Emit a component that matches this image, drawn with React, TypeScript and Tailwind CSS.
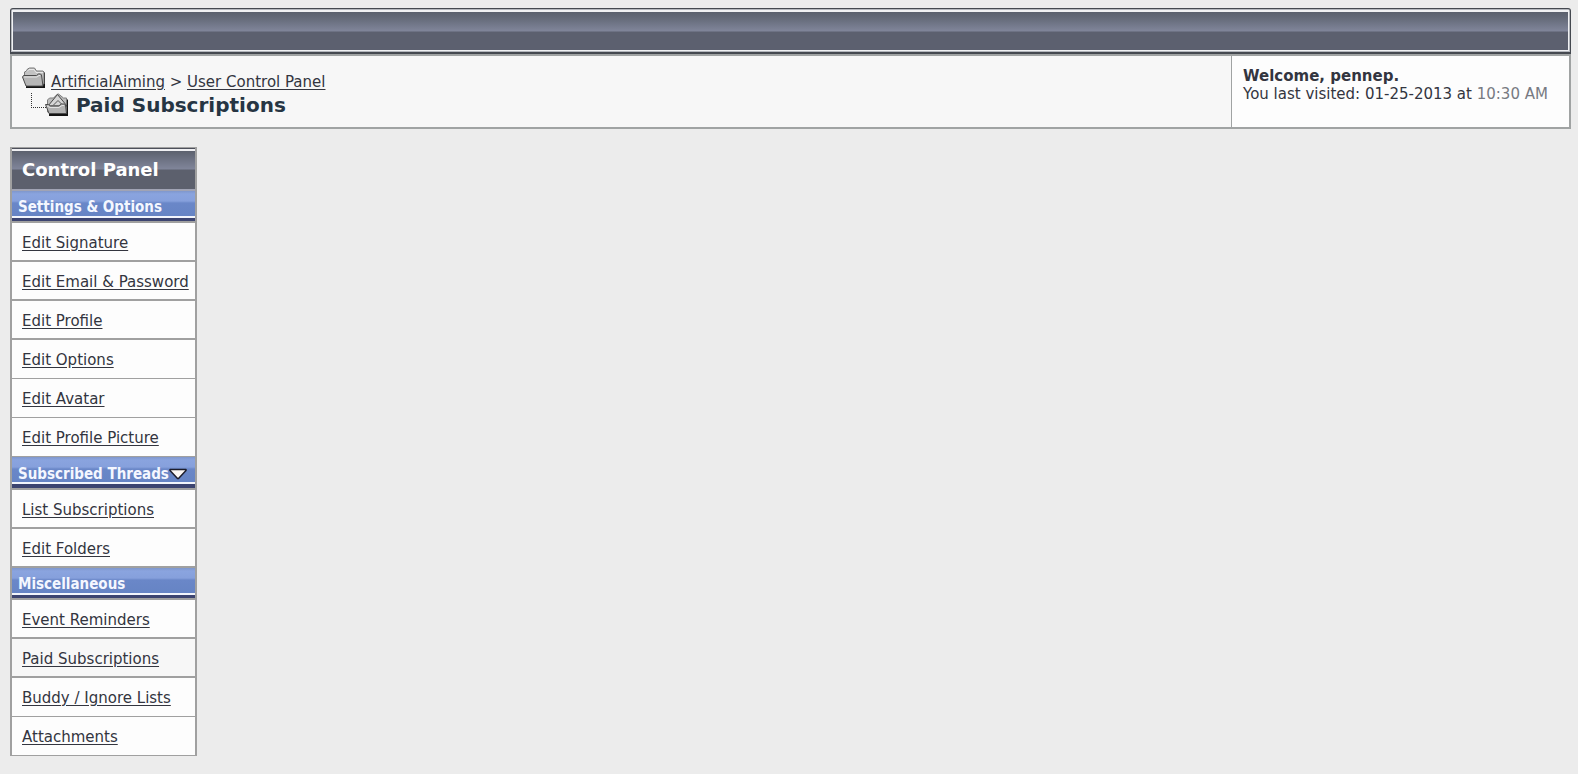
type NavItem = { label: string; current?: boolean; thin?: boolean }
type NavGroup = { title: string; collapsible?: boolean; items: NavItem[] }

const groups: NavGroup[] = [
  {
    title: 'Settings & Options',
    items: [
      { label: 'Edit Signature' },
      { label: 'Edit Email & Password' },
      { label: 'Edit Profile' },
      { label: 'Edit Options', thin: true },
      { label: 'Edit Avatar', thin: true },
      { label: 'Edit Profile Picture', thin: true }
    ]
  },
  {
    title: 'Subscribed Threads',
    collapsible: true,
    items: [{ label: 'List Subscriptions' }, { label: 'Edit Folders' }]
  },
  {
    title: 'Miscellaneous',
    items: [
      { label: 'Event Reminders' },
      { label: 'Paid Subscriptions', current: true },
      { label: 'Buddy / Ignore Lists', thin: true },
      { label: 'Attachments', thin: true }
    ]
  }
]

const FolderIcon = () => (
  <svg width="24" height="22" viewBox="0 0 24 22" className="shrink-0" aria-hidden="true">
    <path d="M4 21V6h18l1-1v16z" fill="#141414" />
    <path d="M2.5 9V5l2-1 1-2 2-1h5l2 3h6.500l1 1v12h-4z" fill="#c2c2c2" stroke="#787878" />
    <path d="M5 4.500l2-2h5l2 3h7" fill="none" stroke="#e8e8e8" />
    <path d="M1.500 8.500h13l2-1.500h2l1 1 1.500 11H4L.5 10z" fill="#b6b6b6" stroke="#4a4a4a" />
    <path d="M2 10h13l2-1.500h1" fill="none" stroke="#e6e6e6" />
    <path d="M5 18.500h14" stroke="#8a8a8a" />
  </svg>
)

const OpenFolderIcon = () => (
  <svg width="38" height="24" viewBox="0 0 38 24" className="shrink-0" aria-hidden="true">
    <path d="M1.5 0v14M1 14.5h16" fill="none" stroke="#333" strokeDasharray="1 1" />
    <path d="M19 23V9l5-4h12l2 2v16z" fill="#141414" />
    <path d="M17.5 11V7l2-2h4l4-4h1l5 4h3v14h-19z" fill="#bdbdbd" stroke="#7c7c7c" />
    <path d="M18 13l9.500-11.500L37 13z" fill="#d6d6d6" stroke="#484848" />
    <path d="M23.500 12l4.500-4.500 4 4" fill="none" stroke="#555" />
    <path d="M15.500 11.500h3l2 1.500h8l3-2h3l1 1 1 8.500H19z" fill="#b2b2b2" stroke="#4a4a4a" />
    <path d="M17 13l3 1.500h9l3-2h2" fill="none" stroke="#e2e2e2" />
  </svg>
)

const CollapseIcon = () => (
  <svg width="18" height="12" viewBox="0 0 18 12" aria-hidden="true">
    <path d="M1 1.500h16v1l-7.500 8h-1l-7.500-8z" fill="#fdf8f4" stroke="#1d1d2b" strokeWidth="1.500" strokeLinejoin="round" />
  </svg>
)

const Group = ({ group }: { group: NavGroup }) => (
  <section>
    <h3
      className={`flex items-center pl-[6px] pt-1 pb-[2px] border-b-2 border-[#a0a0a0] font-['DejaVu_Sans_Condensed','DejaVu_Sans',sans-serif] font-stretch-condensed text-[15px] leading-[18px] font-bold text-[#f4f7ff] whitespace-nowrap bg-[linear-gradient(to_bottom,#7f97cc_0,#8aa4df_3px,#86a0dc_10px,#6a87c8_12px,#6684c4_25px,#f2f5fc_25px,#f2f5fc_27px,#3c4470_27px,#3c4470_31px)] ${group.collapsible ? 'h-[33px]' : 'h-8'}`}
    >
      {group.title}
      {group.collapsible && (
        <button type="button" aria-label="Collapse">
          <CollapseIcon />
        </button>
      )}
    </h3>
    <ul>
      {group.items.map((item) => (
        <li
          key={item.label}
          className={`flex items-center h-[39px] px-[10px] pt-[2px] border-[#a0a0a0] ${item.thin ? 'border-b' : 'border-b-2'} ${item.current ? 'bg-[#f7f7f7]' : 'bg-[#fdfdfd]'}`}
        >
          <a href="#" className="underline underline-offset-2 whitespace-nowrap">
            {item.label}
          </a>
        </li>
      ))}
    </ul>
  </section>
)

const App = () => {
  return (
    <div className="min-h-screen bg-[#ececec] pl-[10px] pt-2 pb-4 pr-[7px] font-['DejaVu_Sans',sans-serif] text-[15px] leading-[18px] text-[#33353f]">
      <div className="h-[46px] rounded-t-[3px] border border-b-2 border-[#454950] bg-[#b4b7bd] p-px">
        <div className="h-full border border-t-2 border-[#f0f1f3] bg-[linear-gradient(to_bottom,#5a606d_0,#666c7b_7px,#80859a_19px,#5c606f_20px)]" />
      </div>

      <header className="flex border-2 border-[#a0a3a3] bg-[#f7f7f7]">
        <nav className="flex-1 px-[10px] pt-[11px] pb-[10px]">
          <div className="flex items-start gap-[5px]">
            <FolderIcon />
            <p className="pt-[6px] whitespace-pre">
              <a href="#" className="underline underline-offset-2">ArtificialAiming</a>
              {' > '}
              <a href="#" className="underline underline-offset-2">User Control Panel</a>
            </p>
          </div>
          <div className="flex items-center gap-2 pt-[2px] pl-2">
            <OpenFolderIcon />
            <h1 className="text-[20px] leading-6 font-bold text-[#263543]">Paid Subscriptions</h1>
          </div>
        </nav>
        <div className="w-[338px] border-l border-[#a0a3a3] bg-[#fdfdfd] pl-[11px] py-[11px]">
          <p className="font-bold">Welcome, pennep.</p>
          <p className="whitespace-nowrap">
            You last visited: 01-25-2013 at <span className="text-[#777a82]">10:30 AM</span>
          </p>
        </div>
      </header>

      <aside className="mt-[18px] w-[187px] border-x-2 border-[#a0a0a0]">
        <h2 className="flex items-center h-11 pl-[10px] pt-1 border-b-2 border-[#a0a3b4] bg-[linear-gradient(to_bottom,#a0a0a0_0,#a0a0a0_1px,#4c4f5a_1px,#4c4f5a_2px,#f0f0f3_2px,#f0f0f3_4px,#5c616e_4px,#80859a_22px,#5c606d_23px)] text-[18px] leading-5 font-bold text-white">
          Control Panel
        </h2>
        {groups.map((group) => (
          <Group key={group.title} group={group} />
        ))}
      </aside>
    </div>
  )
}

export default App
